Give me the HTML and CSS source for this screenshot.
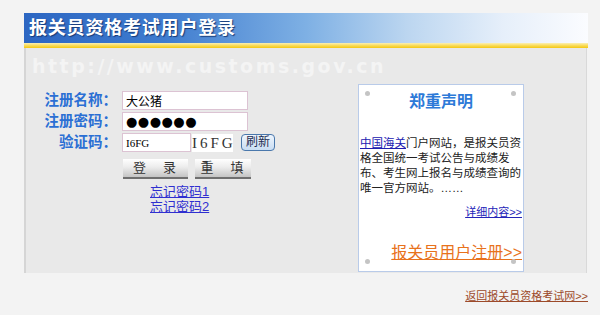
FILE: index.html
```html
<!DOCTYPE html>
<html lang="zh-CN">
  <head>
    <meta charset="UTF-8" />
    <meta name="viewport" content="width=device-width, initial-scale=1.0" />
    <title>报关员资格考试用户登录</title>
    <link rel="stylesheet" href="styles.css">
  </head>
  <body>
    <div class="wrap">
      <div class="header">
        <h1>报关员资格考试用户登录</h1>
      </div>
      <div class="stripe"></div>

      <div class="panel">
        <div class="watermark">http://www.customs.gov.cn</div>

        <div class="content">
          <form class="login">
            <div class="row">
              <label for="userName">注册名称：</label>
              <input id="userName" class="field" type="text" value="大公猪" />
            </div>
            <div class="row">
              <label for="userPwd">注册密码：</label>
              <input id="userPwd" class="field pwd" type="text" value="●●●●●●" />
            </div>
            <div class="row">
              <label for="checkCode">验证码：</label>
              <input id="checkCode" class="field code" type="text" value="I6FG" />
              <span class="code-img">I6FG</span>
              <button type="button" class="refresh">刷新</button>
            </div>
            <div class="actions">
              <button type="submit" class="btn btn-login">登　录</button>
              <button type="reset" class="btn btn-reset">重　填</button>
            </div>
            <div class="forgot">
              <a href="#">忘记密码1</a>
              <a href="#">忘记密码2</a>
            </div>
          </form>

          <div class="notice">
            <span class="dot tl"></span>
            <span class="dot tr"></span>
            <span class="dot bl"></span>
            <span class="dot br"></span>
            <h2>郑重声明</h2>
            <p>
              <a href="#">中国海关</a>门户网站，是报关员资<br />格全国统一考试公告与成绩发<br />布、考生网上报名与成绩查询的<br />唯一官方网站。……
            </p>
            <div class="more"><a href="#">详细内容&gt;&gt;</a></div>
            <div class="register"><a href="#">报关员用户注册&gt;&gt;</a></div>
          </div>
        </div>
      </div>

      <div class="back">
        <a href="#">返回报关员资格考试网&gt;&gt;</a>
      </div>
    </div>
  </body>
</html>
```

FILE: styles.css
```css
body {
  margin: 0;
  background: #f3f3f3;
  font-family: "Liberation Sans", "Noto Sans CJK SC", sans-serif;
  font-size: 12px;
  color: #222;
}

.wrap {
  width: 564px;
  margin: 13px 0 0 24px;
}

/* title bar */
.header {
  height: 30px;
  background: linear-gradient(to right, #2c66c2 0%, #3f7ccf 25%, #7eb0e4 50%, #bcd6f0 68%, #e6effa 85%, #fbfcff 100%);
}

.header h1 {
  margin: 0;
  padding-left: 5px;
  font-size: 18px;
  line-height: 30px;
  letter-spacing: 0.8px;
  font-weight: bold;
  color: #fff;
  text-shadow: 1px 1px 1px #173a78;
}

.stripe {
  height: 5px;
  background: linear-gradient(to bottom, #fbefb4 0%, #f9dc5a 50%, #f4c712 100%);
}

/* main panel */
.panel {
  width: 560px;
  height: 225px;
  background: #e9e9e9;
  border-left: 2px solid #d5d5d5;
  border-right: 1px solid #d9d9d9;
}

.watermark {
  height: 24px;
  padding: 6px 0 0 6px;
  font-family: "DejaVu Sans", sans-serif;
  font-weight: bold;
  font-size: 19px;
  line-height: 24px;
  letter-spacing: 2.5px;
  color: #f4f4f4;
}

.content {
  display: flex;
  align-items: flex-start;
  margin-top: 6px;
}

/* login form */
.login {
  width: 332px;
  padding-top: 7px;
}

.row {
  display: flex;
  align-items: center;
  height: 19px;
  margin-bottom: 2px;
}

.row label {
  width: 91px;
  margin-right: 5px;
  text-align: right;
  font-size: 14.5px;
  line-height: 19px;
  font-weight: bold;
  color: #2b6fd4;
  white-space: nowrap;
}

.field {
  box-sizing: border-box;
  width: 126px;
  height: 19px;
  padding: 0 3px;
  border: 1px solid #dcc3d3;
  background: #fff;
  font-family: "Liberation Sans", "Noto Sans CJK SC", sans-serif;
  font-size: 12px;
  color: #000;
  outline: none;
}

.field.pwd {
  font-family: "DejaVu Sans", sans-serif;
  font-size: 13px;
  letter-spacing: 0.5px;
}

.field.code {
  width: 69px;
  font-family: "Liberation Serif", serif;
  font-size: 11px;
}

.code-img {
  width: 41px;
  height: 18px;
  margin-left: 1px;
  background: #fff;
  font-family: "Liberation Serif", serif;
  font-size: 15px;
  line-height: 18px;
  letter-spacing: 3px;
  text-align: center;
  color: #333;
}

.refresh {
  width: 34px;
  height: 17px;
  margin-left: 8px;
  padding: 0;
  border: 1px solid #4a78ac;
  border-radius: 4px;
  background: linear-gradient(to bottom, #eef5fd, #c9ddf3);
  font-family: "Liberation Sans", "Noto Sans CJK SC", sans-serif;
  font-size: 12px;
  line-height: 15px;
  color: #1c2c50;
}

.actions {
  display: flex;
  gap: 7px;
  margin: 7px 0 0 97px;
}

.btn {
  height: 20px;
  padding: 0;
  border: none;
  border-bottom: 2px solid #6f6f6f;
  background: linear-gradient(to bottom, #ffffff 0%, #ececec 45%, #c4c4c4 100%);
  font-family: "Liberation Sans", "Noto Sans CJK SC", sans-serif;
  font-size: 13px;
  line-height: 18px;
  letter-spacing: 2px;
  color: #333;
}

.btn-login {
  width: 65px;
}

.btn-reset {
  width: 56px;
}

.forgot {
  display: flex;
  flex-direction: column;
  margin: 5px 0 0 124px;
}

.forgot a {
  font-size: 13px;
  line-height: 15px;
  color: #2f2fd0;
}

/* notice box */
.notice {
  position: relative;
  box-sizing: border-box;
  width: 166px;
  height: 188px;
  padding: 0 1px;
  background: #fff;
  border: 1px solid #b9cbe9;
}

.dot {
  position: absolute;
  width: 5px;
  height: 5px;
  border-radius: 50%;
  background: #c4c4c4;
}

.dot.tl { top: 6px; left: 6px; }
.dot.tr { top: 6px; right: 7px; }
.dot.bl { bottom: 7px; left: 6px; }
.dot.br { bottom: 7px; right: 7px; }

.notice h2 {
  margin: 7px 0 0;
  text-align: center;
  font-size: 16px;
  line-height: 20px;
  font-weight: bold;
  color: #2d7ad8;
}

.notice p {
  margin: 24px 0 0;
  font-size: 11.5px;
  line-height: 15px;
  white-space: nowrap;
  color: #222;
}

.notice p a {
  color: #2020b0;
}

.more {
  margin-top: 9px;
  text-align: right;
  font-size: 11px;
  line-height: 15px;
}

.more a {
  color: #2424b8;
}

.register {
  margin-top: 23px;
  text-align: right;
  font-size: 16px;
  line-height: 20px;
}

.register a {
  color: #e8721c;
}

.back {
  margin-top: 16px;
  text-align: right;
  font-size: 11px;
  line-height: 15px;
}

.back a {
  color: #9c4a2a;
}
```
